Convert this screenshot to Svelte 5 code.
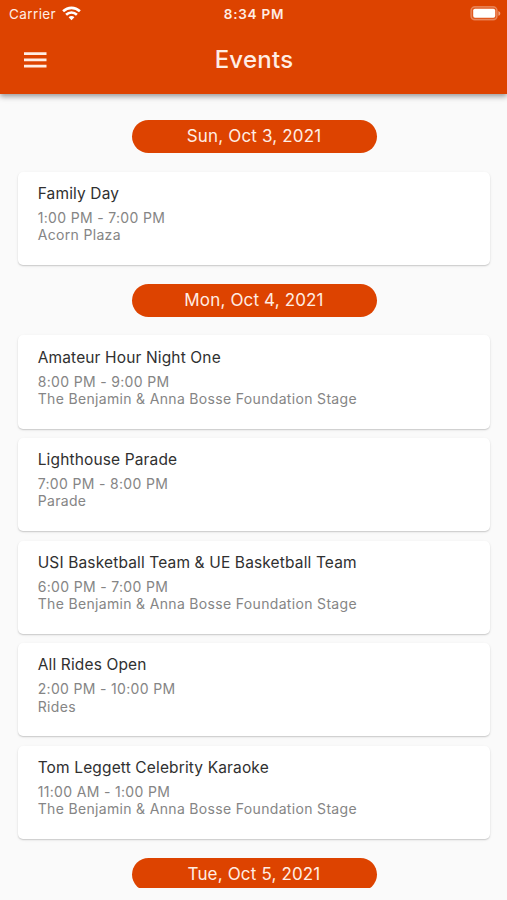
<script>
  const stage = 'The Benjamin & Anna Bosse Foundation Stage';
  const days = [
    { date: 'Sun, Oct 3, 2021', events: [{ name: 'Family Day', time: '1:00 PM - 7:00 PM', place: 'Acorn Plaza' }] },
    {
      date: 'Mon, Oct 4, 2021',
      events: [
        { name: 'Amateur Hour Night One', time: '8:00 PM - 9:00 PM', place: stage },
        { name: 'Lighthouse Parade', time: '7:00 PM - 8:00 PM', place: 'Parade' },
        { name: 'USI Basketball Team & UE Basketball Team', time: '6:00 PM - 7:00 PM', place: stage },
        { name: 'All Rides Open', time: '2:00 PM - 10:00 PM', place: 'Rides' },
        { name: 'Tom Leggett Celebrity Karaoke', time: '11:00 AM - 1:00 PM', place: stage }
      ]
    },
    { date: 'Tue, Oct 5, 2021', events: [] }
  ];
</script>

<div class="screen">
  <header>
    <div class="status">
      <div class="carrier">
        <span>Carrier</span>
        <svg width="19" height="15" viewBox="0 0 19 15" fill="none" stroke="#fff" stroke-width="2.6">
          <path d="M1.1 5.3C5.9 .7 13.1 .7 17.9 5.3" />
          <path d="M4.1 8.7C7.2 5.7 11.8 5.7 14.9 8.7" />
          <path d="M6.6 11.2C8.2 9.6 10.8 9.6 12.4 11.2L9.5 14.2Z" fill="#fff" stroke="none" />
        </svg>
      </div>
      <span class="clock">8:34 PM</span>
      <svg class="battery" width="31" height="15" viewBox="0 0 31 15">
        <rect x="1" y=".8" width="26" height="13" rx="3.8" fill="#fff" fill-opacity=".12" stroke="#fff" stroke-opacity=".3" stroke-width="1.5" />
        <rect x="3.2" y="2.8" width="22" height="9" rx="1.8" fill="#fff" />
        <path d="M28.4 5v4.8c1-.4 1.9-1.3 1.9-2.4s-.9-2-1.9-2.4z" fill="#fff" fill-opacity=".5" />
      </svg>
    </div>
    <div class="toolbar">
      <svg width="24" height="17" viewBox="0 0 24 17" fill="#ffede4">
        <path d="M1 .3h22.500v2.600h-22.500zM1 6.600h22.500v2.600h-22.500zM1 12.800h22.500v2.600h-22.500z" />
      </svg>
      <h1>Events</h1>
    </div>
  </header>

  <main>
    {#each days as day}
      <h2>{day.date}</h2>
      {#if day.events.length}
        <section>
          {#each day.events as event}
            <article>
              <h3>{event.name}</h3>
              <p>{event.time}</p>
              <p>{event.place}</p>
            </article>
          {/each}
        </section>
      {/if}
    {/each}
  </main>
</div>

<style>
  :global(body) { background: #fafafa; }
  .screen {
    height: 900px;
    display: flex;
    flex-direction: column;
    overflow: hidden;
    box-sizing: border-box;
    padding-bottom: 12.5px;
    background: #fafafa;
    font-family: Inter, "Liberation Sans", sans-serif;
  }
  header {
    flex: none;
    position: relative;
    height: 94px;
    background: #dd4300;
    color: #fff;
    box-shadow: 0 2px 5px rgba(0, 0, 0, .32), 0 4px 6px rgba(0, 0, 0, .1);
  }
  .status {
    display: grid;
    grid-template-columns: 1fr auto 1fr;
    align-items: center;
    height: 27px;
    padding: 0 6px 0 9px;
    font-size: 13.5px;
  }
  .carrier { display: flex; align-items: center; gap: 6px; color: #ffede4; letter-spacing: .4px; }
  .carrier svg { margin-top: -1px; }
  .clock { font-weight: 600; color: #ffede4; letter-spacing: .75px; margin-right: 2px; }
  .battery { justify-self: end; }
  .toolbar {
    display: grid;
    grid-template-columns: 1fr auto 1fr;
    align-items: center;
    height: 66px;
    padding: 0 22px 0 23px;
  }
  h1 { margin: -1px 0 0; font-size: 24px; font-weight: 500; letter-spacing: .25px; color: #ffede4; }
  main {
    flex: 1;
    min-height: 0;
    overflow: hidden;
    display: flex;
    flex-direction: column;
    gap: 18.67px;
    padding: 25.9px 17px 0 18px;
  }
  h2 {
    flex: none;
    align-self: center;
    width: 245px;
    height: 33.2px;
    margin: 0;
    border-radius: 17px;
    background: #dd4300;
    color: #ffede4;
    font-size: 17px;
    font-weight: 400;
    line-height: 33.6px;
    text-align: center;
    letter-spacing: .16px;
  }
  section { flex: none; display: flex; flex-direction: column; gap: 9.4px; }
  article {
    height: 93.2px;
    box-sizing: border-box;
    padding: 12.2px 20px 0 19.7px;
    border-radius: 5px;
    background: #fff;
    box-shadow: 0 1px 1.5px rgba(0, 0, 0, .19), 0 1px 4px rgba(0, 0, 0, .03);
  }
  h3 { margin: 0 0 6px; font-size: 15.5px; font-weight: 400; line-height: 19px; color: #303030; letter-spacing: .14px; }
  p { margin: 0; font-size: 14px; line-height: 17.2px; color: #858585; letter-spacing: .33px; }
</style>
